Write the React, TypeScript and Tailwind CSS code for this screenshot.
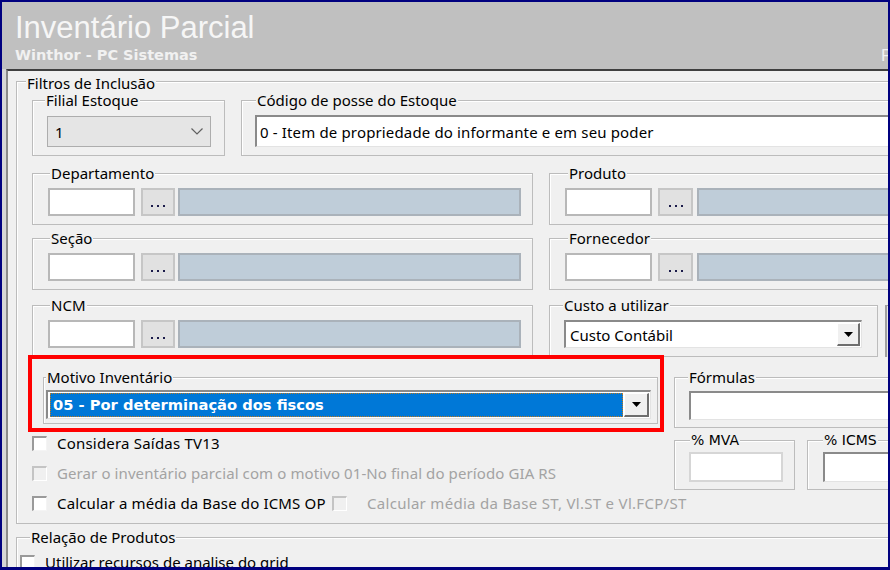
import React from "react";

type GroupProps = {
  label: string;
  className: string;
  labelClass: string;
  children?: React.ReactNode;
};

function Group({ label, className, labelClass, children }: GroupProps) {
  return (
    <div className={`shrink-0 border border-[#bcbcbc] shadow-[inset_1px_1px_0_#ffffff] ${className}`}>
      <div className={`w-fit bg-[#f0f0f0] px-[1px] whitespace-nowrap ${labelClass}`}>{label}</div>
      {children}
    </div>
  );
}

function Check({ label, disabled, textClass }: { label: string; disabled?: boolean; textClass?: string }) {
  return (
    <div className="flex items-center h-[22px] whitespace-nowrap">
      {disabled ? (
        <span className="shrink-0 w-[15px] h-[15px] border-t-2 border-l-2 border-r border-b border-t-[#c4c4c4] border-l-[#c4c4c4] border-r-[#ffffff] border-b-[#ffffff] bg-[#f0f0f0]" />
      ) : (
        <span className="shrink-0 w-[15px] h-[15px] border-t-2 border-l-2 border-r border-b border-t-[#9a9a9a] border-l-[#9a9a9a] border-r-[#f4f4f4] border-b-[#f4f4f4] bg-white" />
      )}
      <span className={`${disabled ? "ml-[10px] text-[#a3a3a3]" : "ml-[10px] text-black"} ${textClass ?? ""}`}>{label}</span>
    </div>
  );
}

function DropBtn({ className }: { className: string }) {
  return (
    <div
      className={`shrink-0 flex items-center justify-center bg-[#f0f0f0] border-t border-l border-r-2 border-b-2 border-t-[#ffffff] border-l-[#ffffff] border-r-[#6e6e6e] border-b-[#6e6e6e] ${className}`}
    >
      <svg width="9" height="5" viewBox="0 0 9 5">
        <path d="M0 0 H9 L4.5 5 Z" fill="#000" />
      </svg>
    </div>
  );
}

function LookupRow({ first, mlBtn, mlGray, wBtn, wGray }: { first: string; mlBtn: string; mlGray: string; wBtn: string; wGray: string }) {
  return (
    <div className={`flex mt-[6px] ${first}`}>
      <div className="shrink-0 w-[87px] h-[28px] bg-white border-2 border-[#b8b8b8]" />
      <div className={`shrink-0 h-[28px] bg-[#e1e1e1] border-2 border-[#c6c6c6] flex items-end justify-center gap-[4px] pb-[7px] ${mlBtn} ${wBtn}`}>
        <span className="w-[2px] h-[2px] bg-[#1b1b4a]" />
        <span className="w-[2px] h-[2px] bg-[#1b1b4a]" />
        <span className="w-[2px] h-[2px] bg-[#1b1b4a]" />
      </div>
      <div className={`shrink-0 h-[28px] bg-[#bfcdd9] border-2 border-[#aab2ba] ${mlGray} ${wGray}`} />
    </div>
  );
}

export default function App() {
  return (
    <div className="w-[890px] h-[570px] bg-[#00007f] pt-[2px] px-[2px] pb-[3px] font-['Noto_Sans',sans-serif] text-[15px] leading-[18px] text-black">
      <div className="w-full h-full overflow-hidden flex flex-col">
        {/* Header */}
        <div className="h-[67px] shrink-0 bg-[#c0c0c0] pl-[13px] pt-[11px]">
          <div className="font-['Liberation_Sans',Arial,sans-serif] text-[31px] leading-[30px] text-[#f6f6f6] whitespace-nowrap">
            Inventário Parcial
          </div>
          <div className="mt-[5px] flex leading-[15px] whitespace-nowrap">
            <div className="w-[866px] shrink-0 font-['DejaVu_Sans',sans-serif] font-bold text-[14.5px] text-[#f1f1f1]">
              Winthor - PC Sistemas
            </div>
            <div className="shrink-0 font-['Liberation_Sans',Arial,sans-serif] text-[17px] text-[#f1f1f1]">PCSistemas</div>
          </div>
        </div>

        {/* Body */}
        <div className="flex-1 flex min-h-0">
          <div className="w-[4px] shrink-0 bg-[#d6d6d6]" />
          <div className="flex-1 min-w-0 bg-[#f0f0f0] border-t-2 border-l-2 border-t-[#3f3f3f] border-l-[#8a8a8a] pl-[8px] pt-[10px] overflow-hidden">
            {/* Filtros de Inclusão */}
            <Group label="Filtros de Inclusão" className="w-[1000px] h-[443px]" labelClass="-mt-[7px] ml-[9px] leading-[16px]">
              {/* Row 1 */}
              <div className="flex pl-[15px] mt-[9px]">
                <Group label="Filial Estoque" className="w-[193px] h-[56px]" labelClass="-mt-[10px] ml-[12px] leading-[18px]">
                  <div className="mt-[7px] ml-[14px] w-[164px] h-[31px] bg-[#e5e5e5] border border-[#adadad] flex items-center justify-between pl-[7px] pr-[7px]">
                    <span>1</span>
                    <svg width="12" height="7" viewBox="0 0 12 7">
                      <path d="M0.5 0.5 L6 6 L11.5 0.5" fill="none" stroke="#606060" strokeWidth="1.2" />
                    </svg>
                  </div>
                </Group>
                <Group label="Código de posse do Estoque" className="ml-[16px] w-[700px] h-[56px]" labelClass="-mt-[10px] ml-[14px] leading-[18px]">
                  <div className="mt-[6px] ml-[13px] w-[700px] h-[32px] bg-white border-t-2 border-l-2 border-r border-b border-t-[#8a8a8a] border-l-[#8a8a8a] border-r-[#e3e3e3] border-b-[#e3e3e3] flex items-center pl-[3px] whitespace-nowrap text-[15px] tracking-[0.15px]">
                    0 - Item de propriedade do informante e em seu poder
                  </div>
                </Group>
              </div>

              {/* Row 2 */}
              <div className="flex pl-[15px] mt-[17px]">
                <Group label="Departamento" className="w-[501px] h-[52px]" labelClass="-mt-[10px] ml-[17px] leading-[18px]">
                  <LookupRow first="ml-[15px]" mlBtn="ml-[6px]" wBtn="w-[34px]" mlGray="ml-[3px]" wGray="w-[343px]" />
                </Group>
                <Group label="Produto" className="ml-[16px] w-[400px] h-[52px]" labelClass="-mt-[10px] ml-[18px] leading-[18px]">
                  <LookupRow first="ml-[15px]" mlBtn="ml-[6px]" wBtn="w-[35px]" mlGray="ml-[4px]" wGray="w-[300px]" />
                </Group>
              </div>

              {/* Row 3 */}
              <div className="flex pl-[15px] mt-[13px]">
                <Group label="Seção" className="w-[501px] h-[52px]" labelClass="-mt-[10px] ml-[17px] leading-[18px]">
                  <LookupRow first="ml-[15px]" mlBtn="ml-[6px]" wBtn="w-[34px]" mlGray="ml-[3px]" wGray="w-[343px]" />
                </Group>
                <Group label="Fornecedor" className="ml-[16px] w-[400px] h-[52px]" labelClass="-mt-[10px] ml-[18px] leading-[18px]">
                  <LookupRow first="ml-[15px]" mlBtn="ml-[6px]" wBtn="w-[35px]" mlGray="ml-[4px]" wGray="w-[300px]" />
                </Group>
              </div>

              {/* Row 4 */}
              <div className="flex pl-[15px] mt-[15px]">
                <Group label="NCM" className="w-[501px] h-[52px]" labelClass="-mt-[10px] ml-[17px] leading-[18px]">
                  <LookupRow first="ml-[15px]" mlBtn="ml-[6px]" wBtn="w-[34px]" mlGray="ml-[3px]" wGray="w-[343px]" />
                </Group>
                <Group label="Custo a utilizar" className="ml-[16px] w-[329px] h-[52px]" labelClass="-mt-[10px] ml-[13px] leading-[18px]">
                  <div className="mt-[6px] ml-[14px] w-[298px] h-[28px] bg-white border-t-2 border-l-2 border-r border-b border-t-[#8a8a8a] border-l-[#8a8a8a] border-r-[#e3e3e3] border-b-[#e3e3e3] flex items-stretch p-[1px]">
                    <div className="flex-1 flex items-center pl-[3px] whitespace-nowrap">Custo Contábil</div>
                    <DropBtn className="w-[23px]" />
                  </div>
                </Group>
                <div className="shrink-0 ml-[7px] w-[10px] h-[52px] border-l-2 border-t border-[#a0a0a0] bg-[#e9e9e9]" />
              </div>

              {/* Lower area */}
              <div className="flex items-start">
                <div className="shrink-0 ml-[11px] -mt-[2px] w-[636px]">
                  <div className="h-[77px] border-4 border-[#ff0000] pt-[18px] pl-[11px]">
                    <Group label="Motivo Inventário" className="w-[615px] h-[47px]" labelClass="-mt-[10px] ml-[2px] leading-[18px]">
                      <div className="mt-[4px] ml-[2px] w-[605px] h-[29px] bg-white border-t-2 border-l-2 border-r border-b border-t-[#8a8a8a] border-l-[#8a8a8a] border-r-[#e3e3e3] border-b-[#e3e3e3] flex items-stretch p-[1px] pl-[2px]">
                        <div className="flex-1 flex items-center bg-[#0078d7] border border-dotted border-[#c47a1c] pl-[2px] text-white font-['DejaVu_Sans',sans-serif] font-bold text-[14.7px] whitespace-nowrap">
                          05 - Por determinação dos fiscos
                        </div>
                        <DropBtn className="ml-[1px] w-[25px]" />
                      </div>
                    </Group>
                  </div>
                  <div className="pl-[4px] flex flex-col gap-[8px]">
                    <Check label="Considera Saídas TV13" textClass="tracking-[0.2px]" />
                    <Check label="Gerar o inventário parcial com o motivo 01-No final do período GIA RS" disabled textClass="tracking-[0.1px]" />
                    <div className="flex">
                      <div className="w-[300px] shrink-0">
                        <Check label="Calcular a média da Base do ICMS OP" textClass="tracking-[0.15px]" />
                      </div>
                      <div className="flex items-center h-[22px] whitespace-nowrap">
                        <span className="shrink-0 w-[15px] h-[15px] border-t-2 border-l-2 border-r border-b border-t-[#c4c4c4] border-l-[#c4c4c4] border-r-[#ffffff] border-b-[#ffffff] bg-[#f0f0f0]" />
                        <span className="ml-[20px] text-[#a3a3a3] tracking-[0.3px]">Calcular média da Base ST, Vl.ST e Vl.FCP/ST</span>
                      </div>
                    </div>
                  </div>
                </div>

                <div className="shrink-0 ml-[10px] mt-[20px] w-[300px]">
                  <Group label="Fórmulas" className="w-[300px] h-[51px]" labelClass="-mt-[10px] ml-[13px] leading-[18px]">
                    <div className="mt-[5px] ml-[14px] w-[300px] h-[29px] bg-white border-t-2 border-l-2 border-r border-b border-t-[#8a8a8a] border-l-[#8a8a8a] border-r-[#e3e3e3] border-b-[#e3e3e3]" />
                  </Group>
                  <div className="flex mt-[12px]">
                    <Group label="% MVA" className="w-[121px] h-[50px]" labelClass="-mt-[10px] ml-[15px] leading-[18px] font-['DejaVu_Sans',sans-serif] text-[14px]">
                      <div className="mt-[3px] ml-[14px] w-[94px] h-[30px] bg-white border-2 border-[#d6d6d6]" />
                    </Group>
                    <Group label="% ICMS" className="ml-[12px] w-[200px] h-[50px]" labelClass="-mt-[10px] ml-[15px] leading-[18px] font-['DejaVu_Sans',sans-serif] text-[14px]">
                      <div className="mt-[3px] ml-[15px] w-[200px] h-[30px] bg-white border-t-2 border-l-2 border-r border-b border-t-[#8a8a8a] border-l-[#8a8a8a] border-r-[#e3e3e3] border-b-[#e3e3e3]" />
                    </Group>
                  </div>
                </div>
              </div>
            </Group>

            {/* Relação de Produtos */}
            <Group label="Relação de Produtos" className="mt-[13px] w-[1000px] h-[100px]" labelClass="-mt-[10px] ml-[13px] leading-[18px]">
              <div className="mt-[5px] ml-[3px]">
                <Check label="Utilizar recursos de analise do grid" />
              </div>
            </Group>
          </div>
        </div>
      </div>
    </div>
  );
}
